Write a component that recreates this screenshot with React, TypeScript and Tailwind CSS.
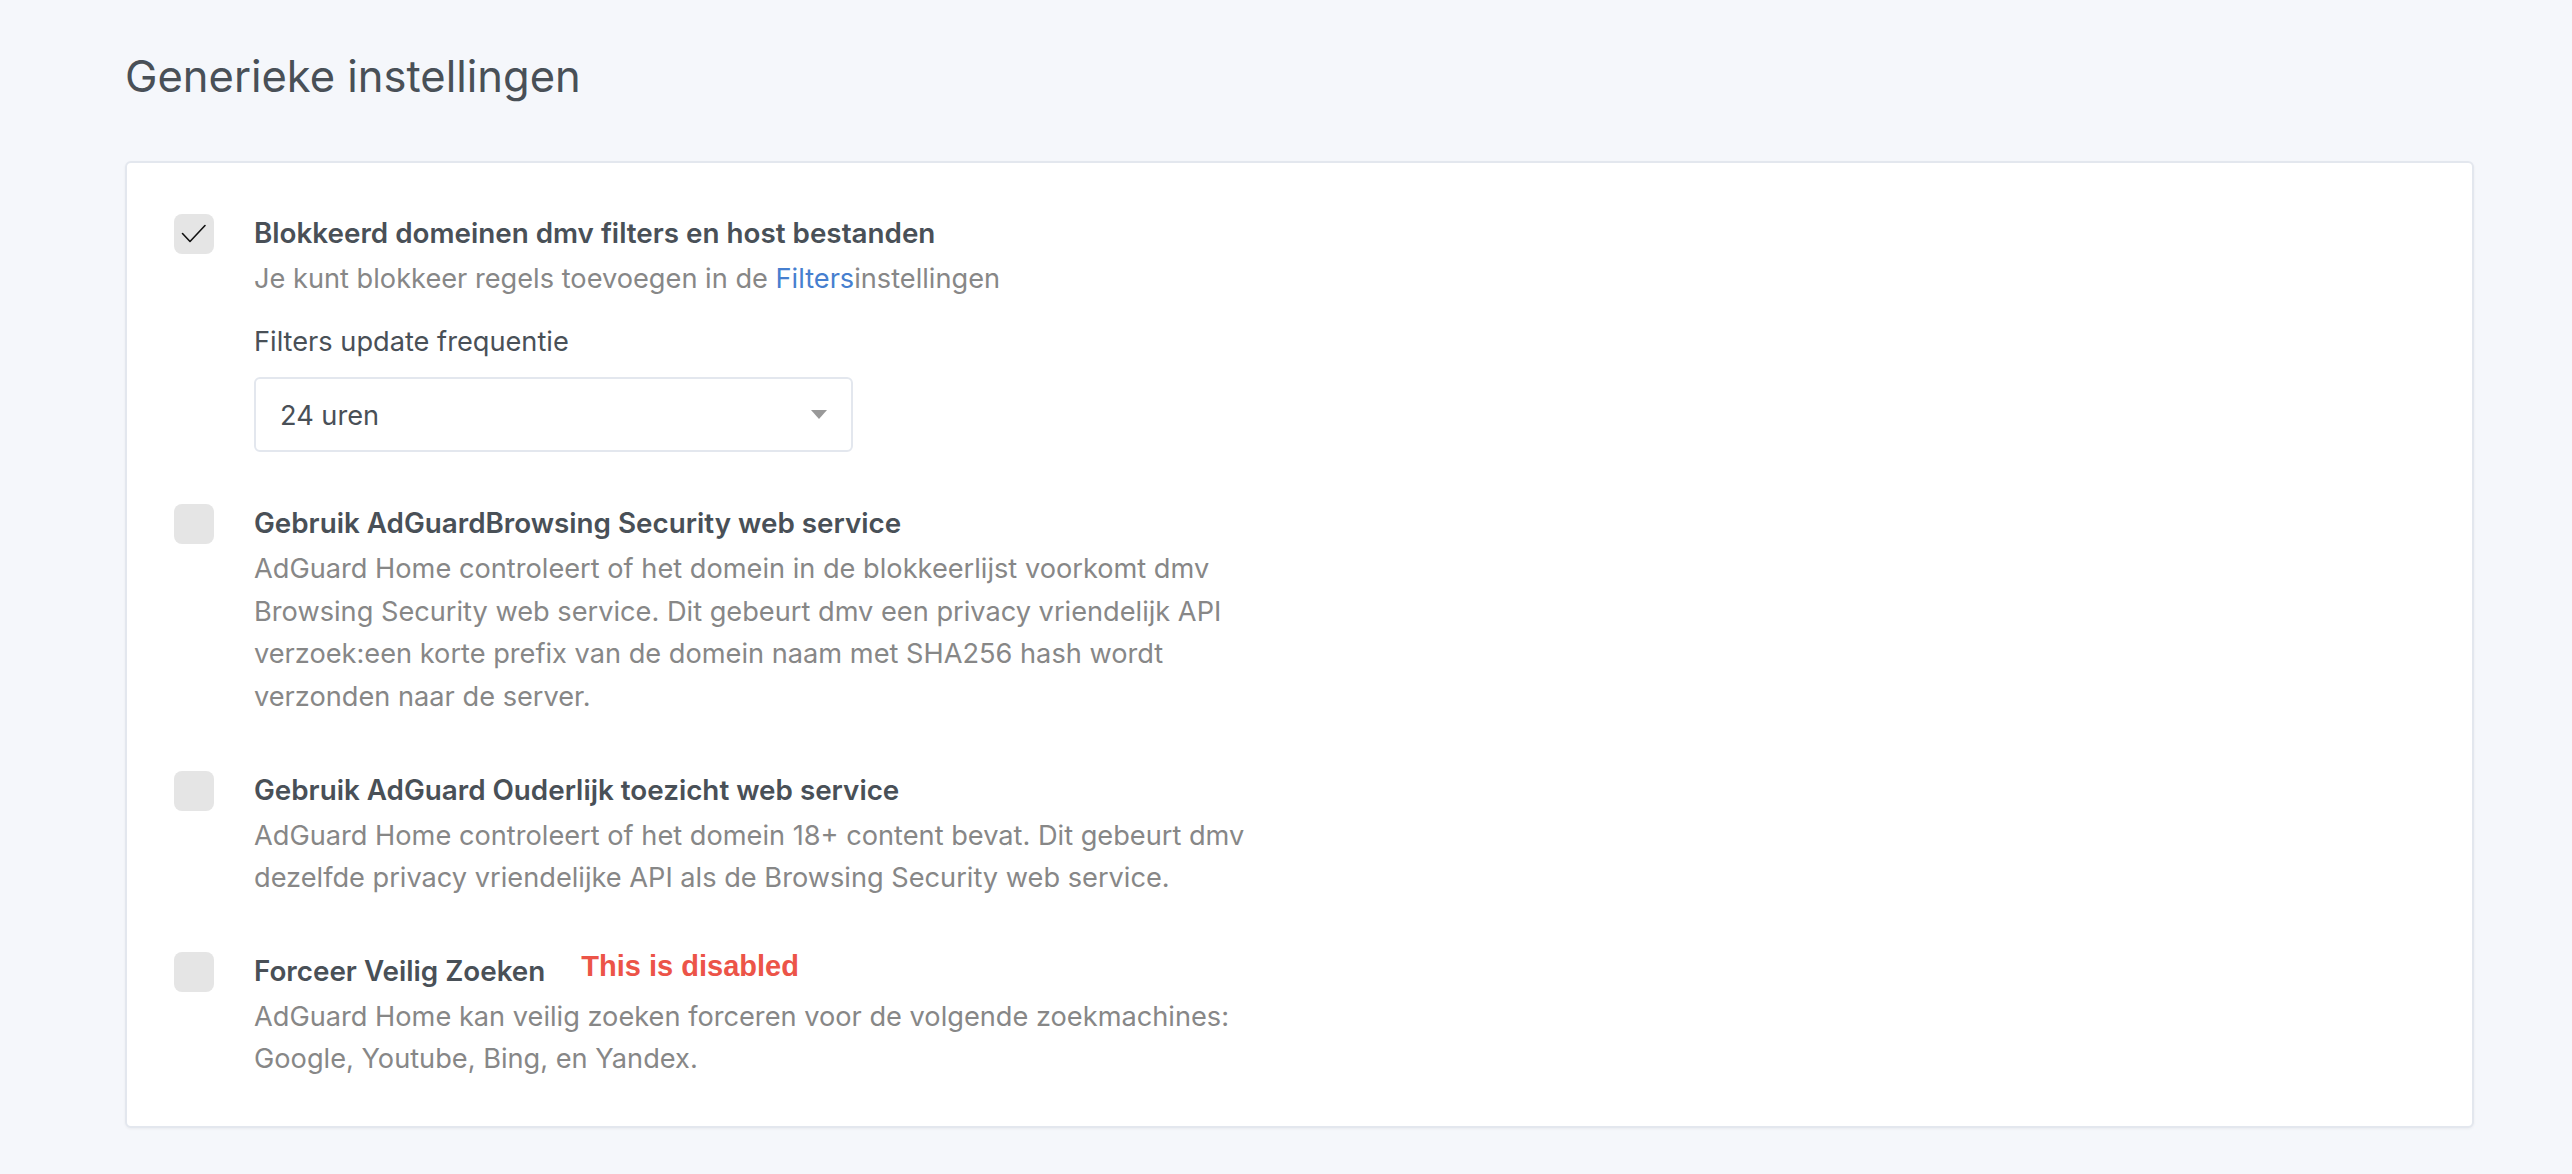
import React from "react";

const font = { fontFamily: "Inter, 'Noto Sans', sans-serif" };

function Box({ checked }: { checked?: boolean }) {
  return (
    <div className="w-[40px] h-[40px] shrink-0 rounded-[8px] bg-[#e5e5e5]">
      {checked && (
        <svg width="40" height="40" viewBox="0 0 40 40" fill="none">
          <path d="M8.5 19.5 L16 27.5 L31 11.5" stroke="#111" strokeWidth="1.6" strokeLinecap="round" strokeLinejoin="round" />
        </svg>
      )}
    </div>
  );
}

function Item({
  checked,
  title,
  extra,
  children,
}: {
  checked?: boolean;
  title: string;
  extra?: React.ReactNode;
  children: React.ReactNode;
}) {
  return (
    <div className="flex items-start gap-[40px]">
      <Box checked={checked} />
      <div className="flex flex-col">
        <div className="flex items-start">
          <div className="text-[27.8px] leading-[38px] font-semibold text-[#495057]">{title}</div>
          {extra}
        </div>
        {children}
      </div>
    </div>
  );
}

export default function App() {
  return (
    <div className="min-h-screen bg-[#f5f7fb] pl-[125px] pr-[98px] pt-[50px] overflow-hidden" style={font}>
      <h1 className="text-[43.5px] leading-[52px] font-normal text-[#495057]">Generieke instellingen</h1>
      <div className="mt-[59px] bg-white border-2 border-[#e3e7ee] rounded-[6px] shadow-[0_1px_3px_rgba(0,0,0,0.05)] pl-[47px] pt-[51px] pb-[45px]">
        <div className="flex flex-col gap-[52px]">
          <Item checked title="Blokkeerd domeinen dmv filters en host bestanden">
            <div className="mt-[6px] text-[27.2px] leading-[42.6px] text-[#878787]">
              Je kunt blokkeer regels toevoegen in de <span className="text-[#467fcf]">Filters</span>instellingen
            </div>
            <div className="mt-[20px] text-[27.2px] leading-[42.6px] text-[#495057]">Filters update frequentie</div>
            <div className="mt-[14px] w-[599px] h-[75px] border-2 border-[#e3e7ee] rounded-[6px] flex items-center justify-between pl-[24px] pr-[24px]">
              <span className="mt-[3px] text-[27.2px] text-[#495057]">24 uren</span>
              <svg width="16" height="9" viewBox="0 0 16 9">
                <path d="M0 0 L16 0 L8 9 Z" fill="#999" />
              </svg>
            </div>
          </Item>
          <Item title="Gebruik AdGuardBrowsing Security web service">
            <div className="mt-[6px] max-w-[1030px] text-[27.2px] leading-[42.6px] text-[#878787]">
              AdGuard Home controleert of het domein in de blokkeerlijst voorkomt dmv Browsing Security web service. Dit gebeurt dmv een privacy vriendelijk API verzoek:een korte prefix van de domein naam met SHA256 hash wordt verzonden naar de server.
            </div>
          </Item>
          <Item title="Gebruik AdGuard Ouderlijk toezicht web service">
            <div className="mt-[6px] max-w-[1030px] text-[27.2px] leading-[42.6px] text-[#878787]">
              AdGuard Home controleert of het domein 18+ content bevat. Dit gebeurt dmv dezelfde privacy vriendelijke API als de Browsing Security web service.
            </div>
          </Item>
          <Item
            title="Forceer Veilig Zoeken"
            extra={
              <span
                className="ml-[36px] text-[29px] leading-[29px] font-bold text-[#ec5448]"
                style={{ fontFamily: "'Liberation Sans', Arial, sans-serif" }}
              >
                This is disabled
              </span>
            }
          >
            <div className="mt-[6px] max-w-[1030px] text-[27.2px] leading-[42.6px] text-[#878787]">
              AdGuard Home kan veilig zoeken forceren voor de volgende zoekmachines: Google, Youtube, Bing, en Yandex.
            </div>
          </Item>
        </div>
      </div>
      <div className="mt-[46px] h-[200px] bg-white border-2 border-[#e3e7ee] rounded-[6px]" />
    </div>
  );
}
